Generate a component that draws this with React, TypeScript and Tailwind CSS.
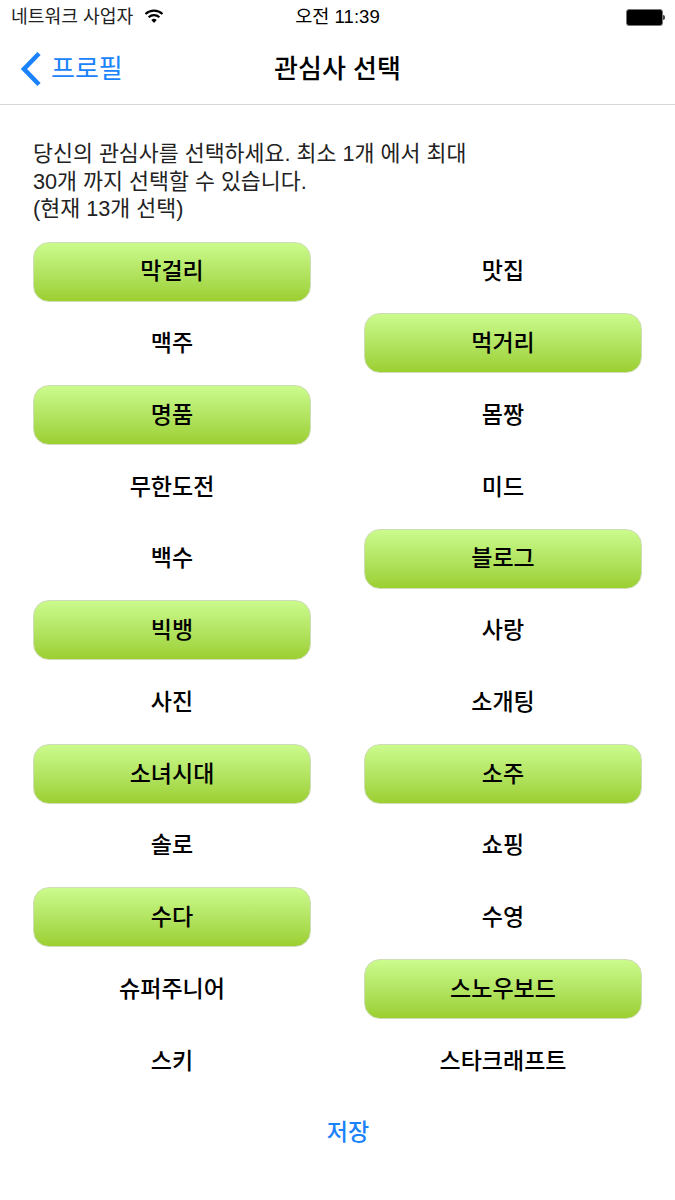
const FONT = "font-['Liberation_Sans','Noto_Sans_CJK_KR',sans-serif]"

const ITEMS: { label: string; on?: boolean }[] = [
  { label: "막걸리", on: true },
  { label: "맛집" },
  { label: "맥주" },
  { label: "먹거리", on: true },
  { label: "명품", on: true },
  { label: "몸짱" },
  { label: "무한도전" },
  { label: "미드" },
  { label: "백수" },
  { label: "블로그", on: true },
  { label: "빅뱅", on: true },
  { label: "사랑" },
  { label: "사진" },
  { label: "소개팅" },
  { label: "소녀시대", on: true },
  { label: "소주", on: true },
  { label: "솔로" },
  { label: "쇼핑" },
  { label: "수다", on: true },
  { label: "수영" },
  { label: "슈퍼주니어" },
  { label: "스노우보드", on: true },
  { label: "스키" },
  { label: "스타크래프트" },
]

function Wifi() {
  return (
    <svg width="20" height="15" viewBox="0 0 20 15" className="ml-[11px] -translate-y-[1px]">
      <path d="M1.5 5 A12.5 12.5 0 0 1 18.5 5" fill="none" stroke="#000" strokeWidth="2.2" />
      <path d="M4.6 8.2 A8 8 0 0 1 15.4 8.2" fill="none" stroke="#000" strokeWidth="2.2" />
      <path d="M7.3 11 L10 14 L12.7 11 A4 4 0 0 0 7.3 11 Z" fill="#000" />
    </svg>
  )
}

function Battery() {
  return (
    <div className="flex items-center">
      <div className="h-[17px] w-[37px] rounded-[3px] border border-[#777] bg-black" />
      <div className="h-[5px] w-[2px] rounded-r-sm bg-[#444]" />
    </div>
  )
}

export default function App() {
  return (
    <div className={`${FONT} h-[1200px] w-[675px] overflow-hidden bg-white text-black`}>
      <div className="relative flex h-[34px] items-center pl-[11px] pr-[10px]">
        <span className="text-[18.2px] leading-none text-[#222]">네트워크 사업자</span>
        <Wifi />
        <span className="absolute inset-x-0 text-center text-[18.6px] leading-none">오전 11:39</span>
        <div className="ml-auto">
          <Battery />
        </div>
      </div>

      <div className="relative flex h-[71px] items-center border-b border-[#d8d8d8]">
        <div className="flex items-center pl-[20px] text-[#1a82fb]">
          <svg width="22" height="36" viewBox="0 0 22 36">
            <path d="M19 2.5 L4 18 L19 33.5" fill="none" stroke="#1a82fb" strokeWidth="4.6" />
          </svg>
          <span className="ml-[9px] text-[26px] leading-none">프로필</span>
        </div>
        <span className="absolute inset-x-0 text-center text-[26px] leading-none font-medium">
          관심사 선택
        </span>
      </div>

      <div className="px-[33px] pt-[35px]">
        <p className="text-[21.7px] leading-[27.5px] text-[#222]">
          당신의 관심사를 선택하세요. 최소 1개 에서 최대
          <br />
          30개 까지 선택할 수 있습니다.
          <br />
          (현재 13개 선택)
        </p>

        <div className="mt-[19px] grid grid-cols-[278px_278px] gap-x-[53px] gap-y-[11.75px]">
          {ITEMS.map((item) => (
            <div
              key={item.label}
              className={
                item.on
                  ? "flex h-[60px] items-center justify-center rounded-[16px] border border-[#cfdcb8] bg-gradient-to-b from-[#cbfb8c] to-[#9ccf2e] text-[23px] font-medium"
                  : "flex h-[60px] items-center justify-center text-[23px] font-medium"
              }
            >
              {item.label}
            </div>
          ))}
        </div>

        <div className="mt-[18px] ml-[21px] text-center text-[23px] leading-[46px] font-medium text-[#1a82fb]">
          저장
        </div>
      </div>
    </div>
  )
}
